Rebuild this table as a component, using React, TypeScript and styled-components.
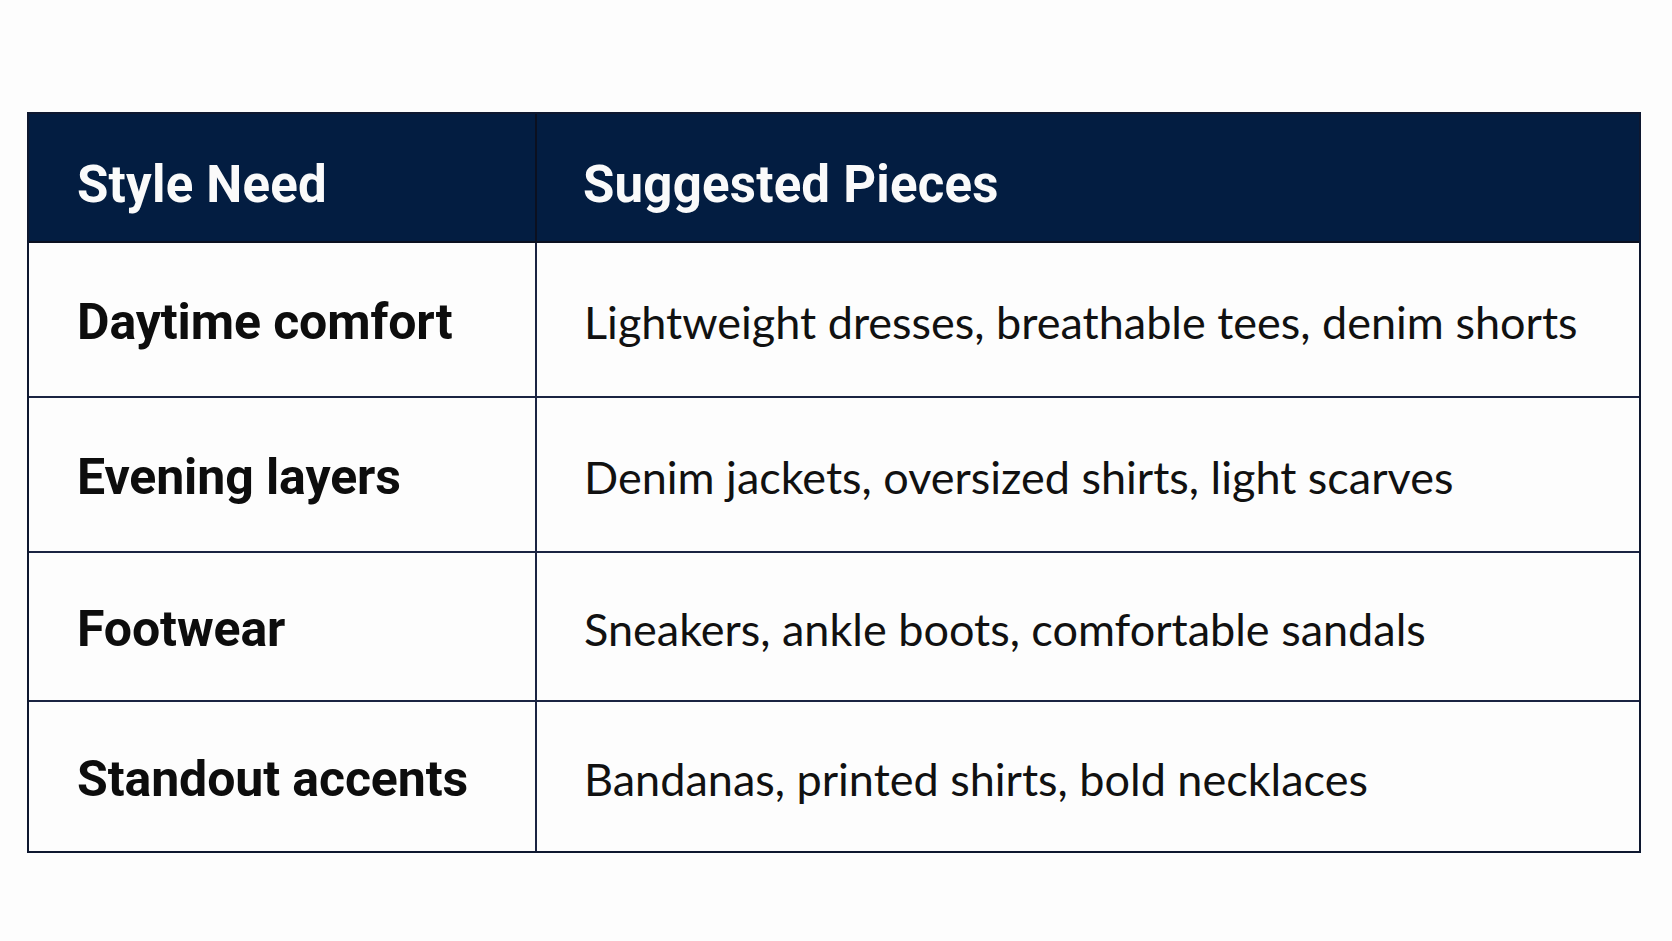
import styled, { createGlobalStyle } from "styled-components"

const GlobalStyle = createGlobalStyle`
    html, body {
        margin: 0;
        padding: 0;
        background: #fdfdfd;
    }
`

interface Row {
    need: string
    pieces: string
    height: number
}

const rows: Row[] = [
    { need: "Daytime comfort", pieces: "Lightweight dresses, breathable tees, denim shorts", height: 155 },
    { need: "Evening layers", pieces: "Denim jackets, oversized shirts, light scarves", height: 155 },
    { need: "Footwear", pieces: "Sneakers, ankle boots, comfortable sandals", height: 149 },
    { need: "Standout accents", pieces: "Bandanas, printed shirts, bold necklaces", height: 149 },
]

const Page = styled.div`
    padding: 112px 0 0 27px;
`

const Table = styled.div`
    width: 1610px;
    border: 2px solid #0e1830;
    display: grid;
    grid-template-columns: 508px 1fr;
    background: #fdfdfd;
`

const HeadCell = styled.div<{ $first?: boolean }>`
    height: 129px;
    box-sizing: border-box;
    background: #031d41;
    display: flex;
    align-items: center;
    padding-left: ${(p) => (p.$first ? "48px" : "46px")};
    padding-top: 13px;
    border-right: ${(p) => (p.$first ? "2px solid #0b1020" : "none")};
    border-bottom: 2px solid #0b1020;
    color: #fafafa;
    font-family: Roboto, "Liberation Sans", sans-serif;
    font-weight: 700;
    font-size: 51px;
    letter-spacing: 0.2px;
`

const NeedCell = styled.div<{ $h: number; $last?: boolean }>`
    height: ${(p) => p.$h}px;
    box-sizing: border-box;
    display: flex;
    align-items: center;
    padding-left: 48px;
    padding-top: 4px;
    border-right: 2px solid #1b2442;
    border-bottom: ${(p) => (p.$last ? "none" : "2px solid #1b2442")};
    color: #0d0d0d;
    font-family: Roboto, "Liberation Sans", sans-serif;
    font-weight: 700;
    font-size: 50px;
    letter-spacing: -0.1px;
`

const PiecesCell = styled.div<{ $h: number; $last?: boolean }>`
    height: ${(p) => p.$h}px;
    box-sizing: border-box;
    display: flex;
    align-items: center;
    padding-left: 47px;
    padding-top: 4px;
    border-bottom: ${(p) => (p.$last ? "none" : "2px solid #1b2442")};
    color: #111;
    font-family: Lato, "Open Sans", sans-serif;
    font-weight: 400;
    font-size: 45px;
`

export default function App() {
    return <Page>
        <GlobalStyle />
        <Table>
            <HeadCell $first>Style Need</HeadCell>
            <HeadCell>Suggested Pieces</HeadCell>
            {rows.map((r, i) => {
                const last = i === rows.length - 1
                return [
                    <NeedCell key={r.need} $h={r.height} $last={last}>{r.need}</NeedCell>,
                    <PiecesCell key={r.pieces} $h={r.height} $last={last}>{r.pieces}</PiecesCell>,
                ]
            })}
        </Table>
    </Page>
}
